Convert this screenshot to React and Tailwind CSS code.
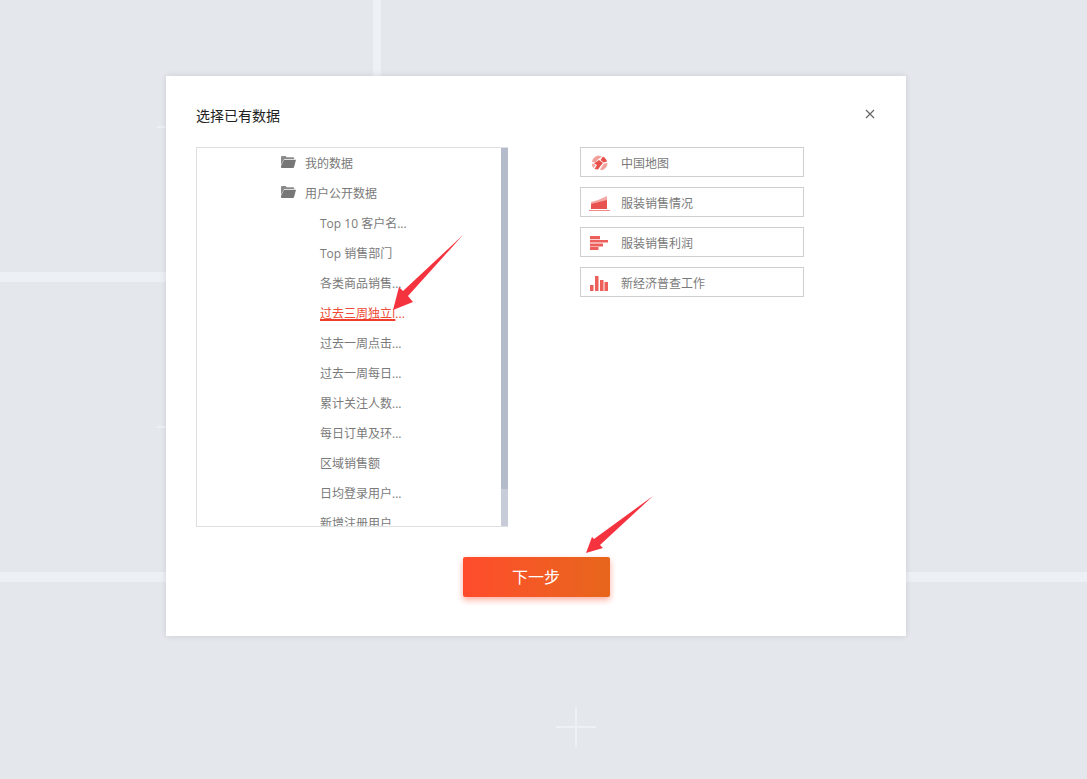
import React from 'react';

const font = "font-['Open_Sans','Noto_Sans_CJK_SC',sans-serif]";

const rows = [
  'Top 10 客户名...',
  'Top 销售部门',
  '各类商品销售...',
  null,
  '过去一周点击...',
  '过去一周每日...',
  '累计关注人数...',
  '每日订单及环...',
  '区域销售额',
  '日均登录用户...',
  '新增注册用户',
];

function FolderIcon() {
  return (
    <svg width="15" height="13" viewBox="0 0 15 13" className="-mt-[2px] shrink-0">
      <path d="M0 1.200C0 .5.5 0 1.200 0h3.300l1.200 1.300h6.600c.5 0 .9.4.9.9v.8H3.200L0 9z" fill="#8a8a8a" />
      <path d="M3 3.800H15l-2 7.400c-.2.5-.6.8-1.100.8H1c-.6 0-1-.4-1-1v-1z" fill="#777777" />
    </svg>
  );
}

function MapIcon() {
  return (
    <svg width="17" height="16" viewBox="0 0 17 16">
      <path d="M7 .5l4 1L7 4.500 4.500 7.500 1 7c.3-3 2.500-5.800 6-6.500z" fill="#f2a09c" />
      <path d="M12 1.500c2 1 3.500 3 4 5l-3.500 1L9.500 5z" fill="#e8504c" />
      <path d="M8 5l4 3-2.500 3L7 14.500 3.500 14 6 10 3 8.500z" fill="#e8504c" />
      <path d="M1 8.500l2 .5 1.500 1.500L2.500 13C1.500 12 1 10.500 1 8.500z" fill="#f2a09c" />
      <path d="M13 8.500l3.500-.5c0 3-2 6-5.500 7.200L9 14.500z" fill="#f2a09c" />
    </svg>
  );
}

function AreaIcon() {
  return (
    <svg width="21" height="16" viewBox="0 0 21 16">
      <path d="M2 7l7-2 9-4v6L2 10z" fill="#f4a9a5" />
      <path d="M2 9l16-4v9H2z" fill="#e9534f" />
      <path d="M0 15.500h21" stroke="#f08a85" strokeWidth="1" />
    </svg>
  );
}

function BarsIcon() {
  return (
    <svg width="18" height="14" viewBox="0 0 18 14">
      <path d="M0 0h10v3.200H0zM0 4h18v2.600H0zM0 7.400h13v3H0zM0 11h8.500v3H0z" fill="#ec5f5a" />
    </svg>
  );
}

function ColumnsIcon() {
  return (
    <svg width="18" height="15" viewBox="0 0 18 15">
      <path d="M0 9h3.500v6H0zM5 0h3.500v15H5zM10 4h3.500v11H10zM14.500 6H18v9h-3.500z" fill="#ec5f5a" />
    </svg>
  );
}

const charts = [
  { name: '中国地图', icon: <MapIcon /> },
  { name: '服装销售情况', icon: <AreaIcon /> },
  { name: '服装销售利润', icon: <BarsIcon /> },
  { name: '新经济普查工作', icon: <ColumnsIcon /> },
];

// red annotation arrows drawn over the screenshot
function Arrow({ className, width, height, points }) {
  return (
    <svg width={width} height={height} className={className}>
      <polygon points={points} fill="#f5333f" />
    </svg>
  );
}

export default function App() {
  return (
    <div className={`relative h-[779px] w-full overflow-hidden bg-[#e4e7ec] ${font}`}>
      {/* canvas guides behind the dialog */}
      <div className="absolute left-[373px] top-0 h-[80px] w-[8px] bg-[#edf0f5]" />
      <div className="absolute left-0 top-[272px] h-[10px] w-[170px] bg-[#edf0f5]" />
      <div className="absolute left-0 top-[572px] h-[10px] w-full bg-[#edf0f5]" />
      <div className="absolute left-[157px] top-[126px] h-[2px] w-[10px] bg-[#edf0f5]" />
      <div className="absolute left-[157px] top-[426px] h-[2px] w-[10px] bg-[#edf0f5]" />
      <div className="absolute left-[556px] top-[726px] h-[2px] w-[40px] bg-[#edf0f5]" />
      <div className="absolute left-[575px] top-[707px] h-[40px] w-[2px] bg-[#edf0f5]" />

      <div className="relative ml-[166px] mt-[76px] inline-block h-[560px] w-[740px] bg-white px-[30px] pt-[30px] align-top shadow-[0_0_6px_rgba(0,0,0,0.12)]">
        <div className="flex items-center justify-between">
          <h2 className="h-[20px] text-[14px] leading-[20px] text-[#222222]">选择已有数据</h2>
          <svg width="10" height="10" viewBox="0 0 10 10" className="mr-[1px] -mt-[4px]">
            <path d="M1 1l8 8M9 1l-8 8" stroke="#666666" strokeWidth="1.200" />
          </svg>
        </div>

        <div className="mt-[21px] flex items-start">
          <div className="relative h-[380px] w-[312px] overflow-hidden border border-r-0 border-[#dddfe3] text-[12px] text-[#7a7a7a]">
            <div className="flex h-[30px] items-center gap-[9px] pl-[84px]">
              <FolderIcon />
              <span className="pt-[2px]">我的数据</span>
            </div>
            <div className="flex h-[30px] items-center gap-[9px] pl-[84px]">
              <FolderIcon />
              <span className="pt-[2px]">用户公开数据</span>
            </div>
            {rows.map((row, i) => (
              <div key={i} className="flex h-[30px] items-center pl-[123px]">
                {row ? (
                  <span className="pt-[2px]">{row}</span>
                ) : (
                  <span className="pt-[2px] text-[#ee4a34]">
                    <span className="underline decoration-[#ee3d2c] decoration-2 underline-offset-[1px]">过去三周独立I</span>...
                  </span>
                )}
              </div>
            ))}
            <div className="absolute bottom-0 right-0 top-0 w-[7px] bg-[#c8ccd8]">
              <div className="h-[341px] bg-[#b4bbcb]" />
            </div>
          </div>

          <div className="ml-[72px] flex w-[224px] flex-col gap-[10px]">
            {charts.map(chart => (
              <div key={chart.name} className="flex h-[30px] items-center border border-[#cfcfcf] text-[12px] text-[#7a7a7a]">
                <div className="mt-[2px] flex w-[40px] shrink-0 items-center justify-center pr-[4px]">{chart.icon}</div>
                <span className="pt-[4px]">{chart.name}</span>
              </div>
            ))}
          </div>
        </div>

        <div className="mt-[30px] flex justify-center">
          <button className="h-[40px] w-[147px] rounded-[2px] bg-gradient-to-r from-[#ff4b2c] to-[#e7661b] text-[16px] text-white shadow-[0_3px_6px_rgba(255,75,44,0.45)]">
            下一步
          </button>
        </div>
      </div>

      <Arrow className="absolute left-[390px] top-[234px]" width="75" height="78" points="73,1 18,62 23,68 3,76 9,53 13,57" />
      <Arrow className="absolute left-[583px] top-[494px]" width="72" height="62" points="70,2 17,51 20,54 3,59 9,43 11,45" />
    </div>
  );
}
